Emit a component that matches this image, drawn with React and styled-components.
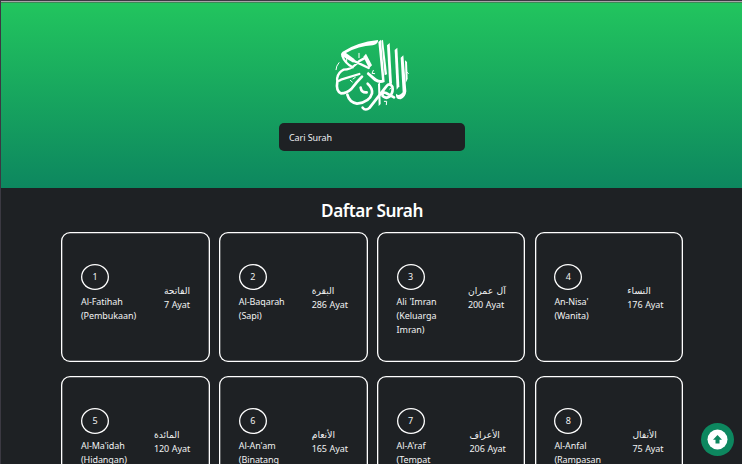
import React from "react";
import styled, { createGlobalStyle } from "styled-components";

const Global = createGlobalStyle`
  * { box-sizing: border-box; }
  html, body { margin: 0; height: 464px; overflow: hidden; background: #1e2124; }
`;

const Page = styled.div`
  height: 464px;
  overflow: hidden;
  border-left: 1px solid #3b3942;
  border-top: 1px solid #3b3942;
  background: #1e2124;
  color: #f1f2f2;
  font: 9px/14px "Noto Sans", "DejaVu Sans", sans-serif;
  letter-spacing: -0.08px;
  word-spacing: 0.4px;
`;

const Hero = styled.header`
  height: 187px;
  border-top: 1px solid #a8a3a9;
  padding-top: 36px;
  display: flex;
  flex-direction: column;
  align-items: center;
  background: linear-gradient(#22c55e, #0d875f);
  box-shadow: inset 0 1px #3d8756;
`;

const Logo = styled.svg`
  width: 101px;
  height: 74px;
  flex: none;
`;

const Search = styled.input`
  width: 186px;
  height: 28px;
  margin-top: 11px;
  padding: 0 10.5px;
  border: 0;
  border-radius: 5px;
  background: #1e2124;
  font: inherit;
  letter-spacing: inherit;
  color: #fff;
  &::placeholder { color: #eceff1; opacity: 1; }
`;

const Title = styled.h1`
  margin: 11px 0 9px;
  padding-left: 1px;
  text-align: center;
  font-size: 17.2px;
  line-height: 24px;
  font-weight: 650;
  letter-spacing: -0.42px;
  color: #fff;
`;

const Grid = styled.main`
  display: grid;
  grid-template-columns: repeat(4, 148.5px);
  grid-auto-rows: 130px;
  gap: 14px 9.3px;
  margin-left: 60.3px;
`;

const Card = styled.article`
  display: flex;
  align-items: stretch;
  justify-content: space-between;
  padding: 32px 19.7px;
  box-shadow: inset 0 0 0 1.3px #fff;
  border-radius: 9px;
`;

const Names = styled.div`
  white-space: pre;
`;

const Number = styled.div`
  width: 28px;
  height: 26px;
  margin-bottom: 5px;
  display: grid;
  place-items: center;
  box-shadow: inset 0 0 0 1.3px #fff;
  border-radius: 50%;
`;

const Verses = styled.div`
  align-self: center;
  padding-top: 2px;
  white-space: nowrap;
`;

const Arabic = styled.div`
  font-family: "DejaVu Sans", sans-serif;
  font-size: 9.2px;
  letter-spacing: 0;
`;

const TopButton = styled.button`
  position: fixed;
  left: 701px;
  top: 423px;
  width: 33px;
  height: 33px;
  padding: 0;
  border: 0;
  border-radius: 50%;
  background: #0d875f;
  svg { display: block; width: 33px; height: 33px; }
`;

const surahs = [
  ["Al-Fatihah\n(Pembukaan)", "الفاتحة", 7],
  ["Al-Baqarah\n(Sapi)", "البقرة", 286],
  ["Ali 'Imran\n(Keluarga\nImran)", "آل عمران", 200],
  ["An-Nisa'\n(Wanita)", "النساء", 176],
  ["Al-Ma'idah\n(Hidangan)", "المائدة", 120],
  ["Al-An'am\n(Binatang", "الأنعام", 165],
  ["Al-A'raf\n(Tempat", "الأعراف", 206],
  ["Al-Anfal\n(Rampasan", "الأنفال", 75],
];

function QuranMark() {
  return (
    <Logo viewBox="5 24 303 222" role="img" aria-label="Al-Quran Al-Karim">
      <g fill="#fff">
        <path d="M176 30Q178 42 160 46Q118 48 80 69L106 88L102 98L68 78Q61 73 70 65Q112 37 176 30Z" />
        <path d="M177 36L185 29L196 156Q181 164 165 153L142 132L146 125L172 146Q182 152 188 149Z" />
        <path d="M186 32L191 29L203 133L196 136Z" />
        <path d="M203 46L211 39L218 160L210 168Z" />
        <path d="M226 60L234 53L240 169L232 179Z" />
        <path d="M244 83L252 76L261 184Q259 202 244 208Q228 209 230 191Q240 201 250 187Z" />
        <path d="M257 91L263 96L265 146L259 159Z" />
        <path d="M132 80L140 71L158 106L149 115Z" />
        <path d="M176 162L182 156L184 222L178 228Z" />
      </g>
      <g fill="none" stroke="#fff" strokeLinecap="round" strokeLinejoin="round">
        <path strokeWidth="7" d="M69 78Q76 99 100 112M102 92L148 114M140 82Q121 90 107 105Q93 119 73 119Q57 127 54 143Q50 158 65 149L120 132" />
        <path strokeWidth="8" d="M54 155Q49 182 65 190Q82 190 96 177L112 157L128 140" />
        <path strokeWidth="8" d="M84 194Q90 217 113 221Q151 216 158 190Q160 174 145 161M124 173Q126 189 142 187" />
        <path strokeWidth="8" d="M130 233Q138 244 151 233L201 169Q211 157 219 170Q223 185 212 199Q201 208 190 198Q187 185 200 189L224 202" />
        <path strokeWidth="3" d="M59 98Q50 108 50 119M119 70L119 83M82 83L82 96M101 147L108 142M162 121L158 130L166 131M262 126L267 130M195 214L202 214L201 224M93 151L99 156M211 177L215 174" />
      </g>
    </Logo>
  );
}

export default function App() {
  return (
    <>
      <Global />
      <Page>
        <Hero>
          <QuranMark />
          <Search placeholder="Cari Surah" />
        </Hero>
        <Title>Daftar Surah</Title>
        <Grid>
          {surahs.map(([name, arabic, count], i) => (
            <Card key={name}>
              <Names><Number>{i + 1}</Number>{name}</Names>
              <Verses><Arabic>{arabic}</Arabic>{count} Ayat</Verses>
            </Card>
          ))}
        </Grid>
        <TopButton aria-label="Back to top">
          <svg viewBox="0 0 33 33">
            <circle cx="16.5" cy="16.5" r="10" fill="#fff" />
            <path d="M16.5 12L21 16.8H18.5V20.5H14.5V16.8H12Z" fill="#0d875f" />
          </svg>
        </TopButton>
      </Page>
    </>
  );
}
